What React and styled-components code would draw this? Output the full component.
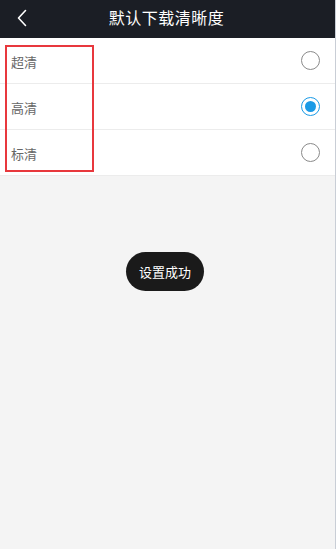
import React, { useState } from "react";
import styled, { createGlobalStyle } from "styled-components";

const Global = createGlobalStyle`
  html, body { margin: 0; padding: 0; background: #f4f4f4; }
  body { font-family: "Noto Sans CJK SC", "Noto Sans", sans-serif; }
`;

const Page = styled.div`
  width: 336px;
  height: 549px;
  box-sizing: border-box;
  background: #f4f4f4;
  border-right: 1px solid #c9ced6;
  position: relative;
  display: flex;
  flex-direction: column;
`;

const Header = styled.div`
  height: 38px;
  background: #1b1e25;
  display: flex;
  align-items: center;
  justify-content: center;
  position: relative;
  flex-shrink: 0;
`;

const Back = styled.div`
  position: absolute;
  left: 12px;
  top: 7px;
  width: 20px;
  height: 22px;
  display: flex;
  align-items: center;
  justify-content: center;
`;

const Title = styled.div`
  color: #fff;
  font-size: 16px;
  letter-spacing: 0.5px;
  margin-left: -2px;
  margin-top: -4px;
`;

const List = styled.div`
  background: #fff;
  position: relative;
`;

const Row = styled.div`
  height: 46px;
  display: flex;
  align-items: center;
  justify-content: space-between;
  padding: 0 15px 0 11px;
  border-bottom: 1px solid #ececec;
  box-sizing: border-box;
`;

const Label = styled.span`
  font-size: 13px;
  color: #666;
  margin-top: 1px;
`;

const Radio = styled.span`
  width: 19px;
  height: 19px;
  box-sizing: border-box;
  border-radius: 50%;
  border: 1.5px solid ${(p) => (p.$on ? "#1a9ae6" : "#8a8a8a")};
  display: flex;
  align-items: center;
  justify-content: center;
`;

const Dot = styled.span`
  width: 11px;
  height: 11px;
  border-radius: 50%;
  background: #1a9ae6;
`;

const Highlight = styled.div`
  position: absolute;
  left: 5px;
  top: 7px;
  width: 89px;
  height: 127px;
  box-sizing: border-box;
  border: 2px solid #e8383d;
  pointer-events: none;
`;

const Toast = styled.div`
  position: absolute;
  left: 126px;
  top: 252px;
  width: 78px;
  height: 39px;
  border-radius: 20px;
  background: #1a1a1a;
  color: #fff;
  font-size: 13px;
  display: flex;
  align-items: center;
  justify-content: center;
`;

const options = ["超清", "高清", "标清"];

export default function App() {
  const [sel, setSel] = useState(1);
  return (
    <Page>
      <Global />
      <Header>
        <Back>
          <svg width="12" height="18" viewBox="0 0 12 18">
            <path d="M9.5 1.5 L2.5 9 L9.5 16.5" fill="none" stroke="#fff" strokeWidth="1.6" strokeLinecap="round" strokeLinejoin="round" />
          </svg>
        </Back>
        <Title>默认下载清晰度</Title>
      </Header>
      <List>
        {options.map((o, i) => (
          <Row key={o} onClick={() => setSel(i)}>
            <Label>{o}</Label>
            <Radio $on={sel === i}>{sel === i && <Dot />}</Radio>
          </Row>
        ))}
        <Highlight />
      </List>
      <Toast>设置成功</Toast>
    </Page>
  );
}
